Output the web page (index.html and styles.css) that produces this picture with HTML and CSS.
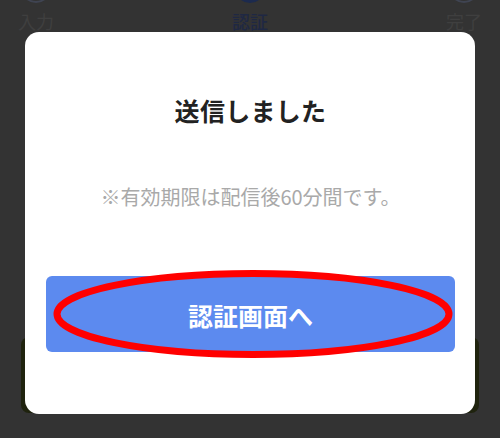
FILE: index.html
```html
<!DOCTYPE html>
<html lang="ja">
<head>
<meta charset="utf-8">
<title>送信しました</title>
<link rel="stylesheet" href="styles.css">
</head>
<body>
<div class="page">
  <div class="steps">
    <div class="step">
      <span class="dot ring"></span>
      <span class="label">入力</span>
    </div>
    <div class="step current">
      <span class="dot solid"></span>
      <span class="label">認証</span>
    </div>
    <div class="step">
      <span class="dot ring"></span>
      <span class="label">完了</span>
    </div>
  </div>
  <div class="behind-card"></div>

  <div class="modal">
    <h1 class="modal-title">送信しました</h1>
    <p class="modal-note">※有効期限は配信後60分間です。</p>
    <div class="action">
      <button class="btn" type="button">認証画面へ</button>
      <svg class="mark" width="408" height="96" viewBox="0 0 408 96" aria-hidden="true">
        <ellipse cx="203" cy="45" rx="196" ry="40.5" fill="none" stroke="#ff0000" stroke-width="7"/>
      </svg>
    </div>
  </div>
</div>
</body>
</html>
```
FILE: styles.css
```css
* { box-sizing: border-box; }
html, body { margin: 0; padding: 0; }
body {
  width: 500px;
  height: 438px;
  overflow: hidden;
  background: #333333;
  font-family: "Noto Sans CJK JP", "Noto Sans", sans-serif;
}
.page {
  position: relative;
  display: flow-root;
  width: 500px;
  height: 438px;
  overflow: hidden;
  background: #333333;
}
.steps {
  display: flex;
  justify-content: space-between;
  padding: 0 18px 0 18px;
  margin-top: -27px;
}
.step {
  display: flex;
  flex-direction: column;
  align-items: center;
  width: 36px;
}
.dot {
  width: 30px;
  height: 30px;
  border-radius: 50%;
}
.dot.ring {
  border: 2px solid #3f4452;
}
.dot.solid {
  background: #1c2a4e;
}
.label {
  margin-top: 7px;
  font-size: 18px;
  line-height: 22px;
  color: #3f3f3f;
  white-space: nowrap;
}
.step.current .label {
  color: #1f2843;
  font-weight: 500;
}
.behind-card {
  position: absolute;
  left: 21px;
  top: 337px;
  width: 458px;
  height: 76px;
  background: #1f230e;
  border-radius: 8px;
}
.modal {
  position: absolute;
  left: 25px;
  top: 32px;
  width: 450px;
  height: 382px;
  background: #ffffff;
  border-radius: 14px;
  padding: 60px 20px 0 21px;
  display: flex;
  flex-direction: column;
  align-items: stretch;
}
.modal-title {
  margin: 0;
  text-align: center;
  font-size: 25px;
  line-height: 36px;
  font-weight: 700;
  color: #222222;
  letter-spacing: 0.3px;
}
.modal-note {
  margin: 55px 0 0 0;
  text-align: center;
  font-size: 20px;
  line-height: 28px;
  color: #a9a9a9;
}
.action {
  position: relative;
  margin-top: 65px;
}
.btn {
  display: block;
  width: 100%;
  height: 76px;
  border: none;
  border-radius: 6px;
  background: #5c8aef;
  color: #ffffff;
  font-family: inherit;
  font-size: 25px;
  font-weight: 700;
  padding: 0;
  padding-top: 2px;
}
.mark {
  position: absolute;
  left: 4px;
  top: -7px;
  pointer-events: none;
}
```
